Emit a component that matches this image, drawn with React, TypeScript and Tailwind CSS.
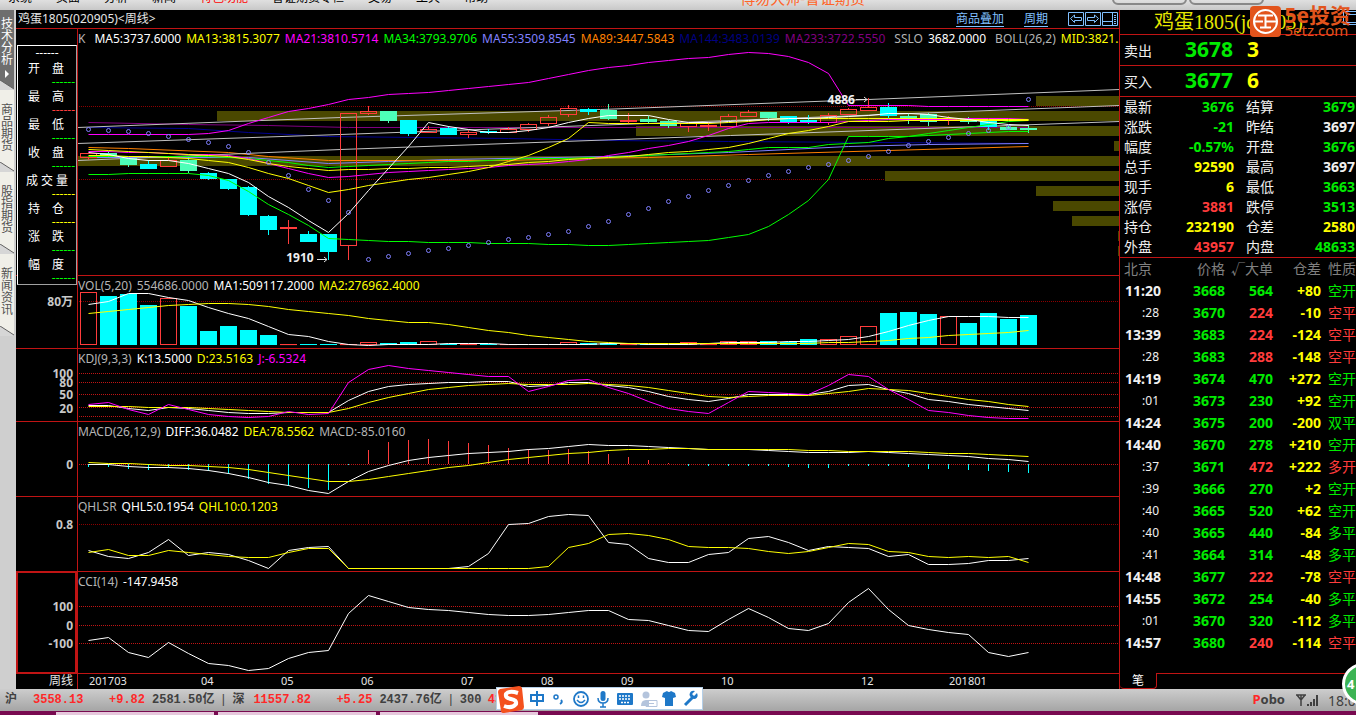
import React from 'react';

const range = (n: number) => Array.from({ length: n }, (_, i) => i);
const barX = (i: number) => 88 + i * 20;
const toPoints = (ys: number[]) => ys.map((y, i) => `${barX(i)},${y}`).join(' ');

const WHITE = '#ffffff';
const YELLOW = '#ffff00';
const MAGENTA = '#ff00ff';
const GREEN = '#00ff00';
const RED = '#ff3c3c';
const CYAN = '#00ffff';
const MINT = '#4dffb8';

// [kind, body top, body bottom, wick top, wick bottom]
type Candle = ['r' | 'c' | 'm', number, number, number, number];

const candles: Candle[] = [
  ['r', 153, 158, 153, 160], ['m', 153, 157, 151, 157], ['m', 158, 165, 158, 167], ['c', 164, 169, 160, 169],
  ['r', 160, 167, 157, 167], ['m', 160, 171, 157, 173], ['c', 173, 179, 172, 180], ['c', 179, 189, 179, 190],
  ['c', 187, 215, 186, 216], ['c', 216, 230, 215, 235], ['r', 227, 229, 220, 244], ['c', 234, 242, 231, 242],
  ['c', 234, 252, 234, 260], ['r', 113, 246, 113, 260], ['r', 111, 114, 106, 115], ['m', 111, 121, 111, 123],
  ['c', 120, 134, 120, 136], ['r', 129, 133, 126, 133], ['c', 128, 135, 126, 135], ['r', 132, 135, 130, 138],
  ['c', 131, 133, 129, 134], ['r', 129, 133, 127, 133], ['r', 124, 130, 123, 132], ['r', 117, 124, 115, 126],
  ['r', 108, 115, 105, 117], ['c', 109, 112, 108, 115], ['m', 110, 119, 104, 120], ['r', 120, 121, 113, 124],
  ['m', 119, 122, 116, 124], ['m', 121, 126, 120, 128], ['r', 123, 127, 122, 132], ['r', 125, 127, 122, 131],
  ['r', 116, 127, 114, 127], ['r', 112, 117, 110, 117], ['m', 112, 118, 112, 121], ['c', 116, 122, 116, 124],
  ['c', 120, 122, 115, 124], ['r', 115, 123, 113, 125], ['r', 109, 115, 108, 115], ['r', 107, 111, 98, 111],
  ['c', 107, 116, 103, 118], ['m', 116, 118, 114, 124], ['m', 114, 122, 113, 126], ['r', 119, 120, 116, 125],
  ['m', 119, 122, 117, 124], ['c', 121, 127, 120, 130], ['m', 127, 130, 125, 130], ['m', 128, 130, 125, 133],
];

const sar = [
  129, 130, 131, 133, 136, 139, 142, 146, 152, 162, 175, 189, 200, 212, 259, 256, 253, 250, 248, 245, 242, 239, 237, 234,
  231, 226, 221, 214, 208, 201, 196, 190, 185, 180, 175, 171, 167, 164, 160, 156, 151, 145, 141, 137, 133, 130, 127, 99,
];

// x, y of the price distribution bars, which all run to the right edge
const distribution = [
  [217, 111], [78, 156], [636, 126], [1036, 96], [1114, 141], [885, 171], [1036, 186], [1053, 201], [1072, 216],
  [1118, 231], [1118, 246],
];

const priceLines: { color: string; ys: number[] }[] = [
  { color: MAGENTA, ys: [134, 134, 134, 134, 134, 134, 133, 130, 123, 117, 111, 108, 104, 99, 97, 94, 93, 92, 90, 88, 86, 84, 82, 78, 74, 70, 67, 65, 62, 60, 58, 57, 54, 52, 53, 56, 62, 73, 105, 105, 105, 105, 106, 106, 106, 106, 106, 106] },
  { color: GREEN, ys: [174, 174, 173, 173, 173, 173, 175, 180, 191, 204, 214, 225, 238, 239, 240, 241, 241, 242, 242, 242, 243, 243, 243, 244, 244, 245, 245, 244, 243, 242, 241, 240, 237, 234, 226, 214, 200, 179, 136, 136, 136, 136, 135, 134, 133, 132, 131, 131] },
  { color: GREEN, ys: [156, 156, 156, 156, 156, 156, 156, 157, 158, 160, 162, 165, 167, 166, 165, 164, 163, 162, 161, 161, 160, 159, 158, 158, 158, 157, 157, 156, 155, 154, 153, 152, 151, 149, 147, 147, 147, 144, 143, 142, 138, 136, 133, 130, 127, 124, 121, 120] },
  { color: MAGENTA, ys: [151, 151, 152, 152, 153, 154, 154, 155, 158, 163, 168, 173, 177, 176, 174, 172, 171, 170, 169, 168, 167, 165, 164, 163, 161, 159, 155, 152, 148, 145, 141, 135, 128, 123, 122, 122, 122, 122, 121, 120, 119, 119, 119, 119, 118, 118, 118, 119] },
  { color: YELLOW, ys: [149, 150, 151, 152, 153, 154, 155, 156, 159, 163, 166, 168, 170, 169, 169, 168, 168, 167, 167, 166, 165, 164, 162, 161, 159, 158, 157, 156, 154, 152, 151, 149, 147, 143, 138, 133, 130, 126, 121, 121, 121, 120, 120, 120, 120, 120, 120, 120] },
  { color: YELLOW, ys: [155, 155, 156, 156, 157, 158, 160, 162, 167, 173, 178, 185, 192, 189, 185, 182, 179, 177, 174, 171, 167, 161, 155, 147, 138, 122, 123, 123, 123, 123, 123, 123, 122, 121, 119, 118, 118, 118, 118, 118, 118, 118, 118, 118, 119, 119, 119, 119] },
  { color: WHITE, ys: [152, 154, 158, 160, 160, 163, 168, 173, 182, 196, 207, 220, 232, 213, 190, 168, 146, 122, 126, 129, 132, 132, 130, 127, 122, 118, 115, 115, 115, 119, 122, 122, 121, 120, 119, 118, 118, 117, 116, 115, 113, 113, 114, 117, 119, 122, 124, 125] },
];

const slowLines = [
  { color: '#800080', points: '88,122 188,124 268,125 348,127 1028,127' },
  { color: '#000090', points: '88,127 188,128 248,132 328,136 508,138 608,140 728,141 1028,143' },
  { color: '#8080ff', points: '88,157 248,157 328,163 388,161 448,159 608,156 728,152 848,146 928,144 1028,143' },
  { color: '#ff8000', points: '88,147 128,148 228,152 268,156 328,160 508,160 568,158 648,157 748,154 888,150 1028,146' },
  { color: '#c0c0c0', points: '77,127 340,117 600,109 868,99 1119,89' },
  { color: '#c0c0c0', points: '77,143 340,134 730,120 1119,105' },
  { color: '#c0c0c0', points: '77,160 340,149 730,135 1119,121' },
];

const volume: ['r' | 'c', number][] = [
  ['r', 292], ['c', 296], ['c', 294], ['c', 305], ['r', 298], ['c', 306], ['c', 331], ['c', 326], ['c', 330], ['c', 335],
  ['r', 344], ['c', 344], ['c', 344], ['r', 344], ['r', 342], ['c', 343], ['c', 342], ['r', 341], ['c', 344], ['r', 344],
  ['c', 344], ['r', 344], ['c', 345], ['c', 345], ['r', 342], ['c', 343], ['c', 343], ['r', 344], ['c', 344], ['c', 345],
  ['r', 342], ['r', 344], ['r', 341], ['r', 341], ['c', 341], ['c', 342], ['c', 339], ['r', 339], ['r', 336], ['r', 326],
  ['c', 313], ['c', 312], ['c', 314], ['r', 316], ['c', 323], ['c', 313], ['c', 319], ['c', 315],
];

const volMa1 = [304, 301, 293, 293, 297, 300, 307, 313, 318, 326, 334, 336, 341, 344, 345, 344, 344, 344, 343, 343, 343, 344, 344, 344, 344, 344, 343, 343, 344, 344, 344, 343, 342, 342, 342, 341, 341, 340, 339, 336, 331, 325, 320, 316, 316, 316, 317, 317];
const volMa2 = [313, 311, 309, 307, 305, 304, 303, 303, 304, 306, 309, 311, 313, 315, 318, 320, 322, 322, 324, 327, 330, 332, 335, 337, 339, 341, 342, 343, 343, 343, 343, 343, 343, 343, 343, 343, 343, 342, 342, 341, 340, 338, 337, 335, 334, 333, 332, 330];

const kdjK = [405, 405, 408, 410, 407, 408, 410, 412, 413, 413, 412, 412, 412, 400, 391, 386, 384, 383, 382, 382, 381, 381, 386, 385, 382, 382, 385, 387, 391, 396, 399, 401, 398, 394, 394, 394, 394, 391, 385, 384, 389, 393, 399, 401, 404, 406, 408, 410];
const kdjD = [406, 406, 406, 407, 407, 407, 408, 409, 410, 411, 412, 412, 412, 408, 402, 397, 393, 389, 387, 385, 384, 383, 384, 384, 384, 383, 384, 385, 387, 390, 393, 396, 397, 396, 395, 395, 395, 393, 391, 388, 389, 390, 393, 396, 399, 401, 404, 406];
const kdjJ = [404, 402, 409, 414, 404, 409, 414, 416, 417, 416, 411, 414, 413, 382, 369, 365, 368, 370, 372, 374, 376, 376, 391, 386, 380, 379, 387, 393, 401, 408, 411, 413, 402, 391, 392, 393, 394, 385, 374, 376, 389, 399, 410, 412, 415, 417, 418, 418];

const diff = [464, 464, 466, 467, 467, 468, 470, 473, 477, 482, 485, 490, 493, 481, 471, 465, 460, 457, 455, 453, 452, 451, 449, 448, 446, 444, 445, 445, 446, 447, 448, 449, 449, 449, 450, 451, 452, 452, 452, 451, 452, 453, 454, 455, 456, 458, 459, 461];
const dea = [462, 463, 463, 464, 465, 465, 466, 467, 469, 472, 475, 478, 481, 481, 479, 476, 473, 470, 467, 465, 462, 459, 457, 455, 453, 452, 450, 449, 449, 448, 448, 449, 449, 449, 449, 449, 450, 450, 451, 451, 451, 451, 452, 453, 453, 454, 455, 456];
const hist = [467, 467, 469, 470, 468, 470, 471, 474, 479, 484, 486, 488, 490, 465, 450, 442, 440, 439, 441, 443, 445, 448, 449, 450, 449, 451, 454, 457, 460, 463, 466, 466, 466, 466, 466, 467, 468, 468, 466, 466, 466, 467, 469, 469, 470, 471, 472, 473];

const qhl5 = [550, 556, 558, 552, 539, 555, 552, 554, 560, 568, 550, 547, 546, 568, 568, 568, 568, 568, 568, 566, 553, 524, 523, 516, 514, 515, 542, 544, 558, 562, 562, 554, 552, 538, 536, 542, 550, 546, 547, 548, 556, 554, 564, 564, 563, 560, 560, 558];
const qhl10 = [552, 549, 555, 555, 550, 552, 554, 556, 557, 557, 552, 548, 548, 568, 568, 568, 568, 568, 568, 568, 568, 568, 568, 566, 547, 543, 534, 533, 535, 539, 546, 547, 547, 548, 551, 553, 551, 547, 543, 544, 551, 552, 556, 557, 556, 557, 556, 562];
const cci = [640, 637, 652, 657, 642, 653, 663, 665, 670, 668, 658, 652, 650, 613, 595, 601, 607, 609, 610, 612, 614, 615, 615, 614, 612, 610, 610, 619, 620, 625, 630, 631, 619, 608, 617, 628, 630, 623, 602, 588, 609, 625, 629, 632, 634, 652, 656, 652];

const months = [
  { label: '201703', x: 89 }, { label: '04', x: 201 }, { label: '05', x: 281 }, { label: '06', x: 361 },
  { label: '07', x: 461 }, { label: '08', x: 541 }, { label: '09', x: 621 }, { label: '10', x: 721 },
  { label: '12', x: 861 }, { label: '201801', x: 949 },
];

const legend = [
  ['开盘', 'text-[#00ff00]'], ['最高', 'text-[#ff3c3c]'], ['最低', 'text-[#00ff00]'], ['收盘', 'text-[#00ff00]'],
  ['成交量', 'text-[#ffff00]'], ['持仓', 'text-[#ffff00]'], ['涨跌', 'text-[#00ff00]'], ['幅度', 'text-[#00ff00]'],
];

const G = 'text-[#00eb00]';
const R = 'text-[#ff3c3c]';
const Y = 'text-[#ffff00]';
const W = 'text-[#f0f0f0]';

const quotes = [
  ['最新', '3676', G, '结算', '3679', G],
  ['涨跌', '-21', G, '昨结', '3697', W],
  ['幅度', '-0.57%', G, '开盘', '3676', G],
  ['总手', '92590', Y, '最高', '3697', W],
  ['现手', '6', Y, '最低', '3663', G],
  ['涨停', '3881', R, '跌停', '3513', G],
  ['持仓', '232190', Y, '仓差', '2580', Y],
  ['外盘', '43957', R, '内盘', '48633', G],
];

const trades = [
  ['11:20', '3668', '564', '+80', '空开', G],
  [':28', '3670', '224', '-10', '空平', R],
  ['13:39', '3683', '224', '-124', '空平', R],
  [':28', '3683', '288', '-148', '空平', R],
  ['14:19', '3674', '470', '+272', '空开', G],
  [':01', '3673', '230', '+92', '空开', G],
  ['14:24', '3675', '200', '-200', '双平', G],
  ['14:40', '3670', '278', '+210', '空开', G],
  [':37', '3671', '472', '+222', '多开', R],
  [':39', '3666', '270', '+2', '空开', G],
  [':40', '3665', '520', '+62', '空开', G],
  [':40', '3665', '440', '-84', '多平', G],
  [':41', '3664', '314', '-48', '多平', G],
  ['14:48', '3677', '222', '-78', '空平', R],
  ['14:55', '3672', '254', '-40', '多平', G],
  [':01', '3670', '320', '-112', '多平', G],
  ['14:57', '3680', '240', '-114', '空平', R],
];

function Line({ ys, color }: { ys: number[]; color: string }) {
  return <polyline points={toPoints(ys)} fill="none" stroke={color} strokeWidth="1" transform="translate(0.5 0.5)" />;
}

interface PanelProps {
  className: string;
  top: number;
  height: number;
  grid: number[];
  dim?: boolean;
  labels?: [string, number][];
  header: [string, string][];
  active?: boolean;
  aside?: React.ReactNode;
  overlay?: React.ReactNode;
  children: React.ReactNode;
}

function Panel({ className, top, height, grid, dim, labels = [], header, active, aside, overlay, children }: PanelProps) {
  const pct = (y: number) => `${((y - top) / height) * 100}%`;
  return (
    <section className={`flex min-h-0 border-b border-[#c01414] ${className}`}>
      <div className="relative w-[62px] shrink-0 border-r border-[#c01414]">
        {active && <div className="absolute -top-px inset-x-0 -bottom-px border-2 border-[#c01414]" />}
        {labels.map(([text, y]) => (
          <span
            key={text}
            className="absolute right-[4px] -translate-y-1/2 text-[12px] leading-[16px] font-bold text-[#c8c8c8]"
            style={{ top: pct(y) }}
          >
            {text}
          </span>
        ))}
        {aside}
      </div>
      <div className="relative flex-1 min-w-0 overflow-hidden">
        <svg className="absolute inset-0 w-full h-full" viewBox={`78 ${top} 1041 ${height}`} preserveAspectRatio="none">
          {grid.map((y) => (
            <line key={y} x1="79" x2="1119" y1={y + 0.5} y2={y + 0.5} stroke={dim ? '#8c0000' : '#c01414'} strokeDasharray="1 1" shapeRendering="crispEdges" />
          ))}
          {children}
        </svg>
        <div className="relative flex gap-[5px] pt-[2px] whitespace-nowrap text-[12px] leading-[16px]">
          {header.map(([text, cls]) => (
            <span key={text} className={cls}>{text}</span>
          ))}
        </div>
        {overlay}
      </div>
    </section>
  );
}

function SideTab({ text, active }: { text: string; active?: boolean }) {
  return (
    <button className={`relative flex flex-col items-center justify-start w-full text-[12px] leading-[12px] ${active ? 'h-[80px] pt-[8px] bg-[#6e6e6e] text-white' : 'h-[82px] pt-[14px] bg-[#f0efe8] text-[#505050]'}`}>
      {text.split('').map((c) => (
        <span key={c}>{c}</span>
      ))}
      {active && (
        <svg className="w-[4px] h-[8px] mt-[4px]" viewBox="0 0 4 8">
          <path d="M0 0 L4 4 L0 8 Z" fill="#fff" />
        </svg>
      )}
      <svg className="absolute bottom-0 left-0 w-full h-[10px]" viewBox="0 0 14 10" preserveAspectRatio="none">
        <path d="M0 0 L14 9 V10 H0 Z" fill="#d6d6d6" />
        <path d="M0 0 L14 9" stroke="#606060" fill="none" />
      </svg>
    </button>
  );
}

function Legend() {
  return (
    <div className="absolute z-10 top-[16px] left-px right-0 h-[240px] bg-black border border-t-white border-l-white border-b-[#a0a0a0] border-r-[#a0a0a0] text-[12px] text-white">
      <div className="h-[14px] text-center leading-[14px]">------</div>
      {legend.map(([name, color]) => (
        <div key={name} className="h-[28px]">
          <div className={`flex justify-between leading-[18px] ${name.length > 2 ? 'px-2' : 'pl-[10px] pr-[12px]'}`}>
            {name.split('').map((c) => (
              <span key={c}>{c}</span>
            ))}
          </div>
          <div className={`text-right leading-[8px] pr-px ${color}`}>------</div>
        </div>
      ))}
    </div>
  );
}

function PricePanel() {
  return (
    <Panel
      className="flex-[246_1_0px]"
      top={29}
      height={246}
      grid={[106, 179]}
      dim
      header={[
        ['K', 'text-[#b4b4b4] mr-1'],
        ['MA5:3737.6000', 'text-white'],
        ['MA13:3815.3077', 'text-[#ffff00]'],
        ['MA21:3810.5714', 'text-[#ff00ff]'],
        ['MA34:3793.9706', 'text-[#00ff00]'],
        ['MA55:3509.8545', 'text-[#8080ff]'],
        ['MA89:3447.5843', 'text-[#ff8000]'],
        ['MA144:3483.0139', 'text-[#000080]'],
        ['MA233:3722.5550', 'text-[#800080]'],
        ['SSLO', 'text-[#b4b4b4] ml-1'],
        ['3682.0000', 'text-white'],
        ['BOLL(26,2)', 'text-[#b4b4b4] ml-1'],
        ['MID:3821.5000', 'text-[#ffff00]'],
      ]}
      aside={<Legend />}
      overlay={
        <>
          <span className="absolute left-[20%] top-[90%] text-[12px] leading-[16px] font-bold text-[#f0f0f0]">1910</span>
          <span className="absolute left-[72%] top-[26%] text-[12px] leading-[14px] font-bold text-[#f0f0f0]">4886</span>
        </>
      }
    >
      {distribution.map(([x, y]) => (
        <rect key={`${x}-${y}`} x={x} y={y} width={1119 - x} height="10" fill="#4a4800" />
      ))}
      {slowLines.map((l) => (
        <polyline key={l.points} points={l.points} fill="none" stroke={l.color} transform="translate(0.5 0.5)" />
      ))}
      {candles.map(([kind, top, bottom, high, low], i) => {
        const x = barX(i);
        if (kind === 'r') {
          return (
            <g key={x} stroke={RED} fill="none" shapeRendering="crispEdges">
              <rect x={x - 7.5} y={top + 0.5} width="16" height={Math.max(bottom - top - 1, 1)} />
              <path d={`M${x + 0.5} ${high} V${top} M${x + 0.5} ${bottom} V${low}`} />
            </g>
          );
        }
        return (
          <g key={x} fill={kind === 'c' ? CYAN : MINT} shapeRendering="crispEdges">
            <rect x={x - 8} y={top} width="17" height={bottom - top} />
            <rect x={x} y={high} width="1" height={low - high} />
          </g>
        );
      })}
      {priceLines.map((l, i) => (
        <Line key={i} ys={l.ys} color={l.color} />
      ))}
      {sar.map((y, i) => (
        <circle key={i} cx={barX(i) + 0.5} cy={y + 0.5} r="2" fill="none" stroke="#8080ff" />
      ))}
      <path d="M317 259.5 H327 M324 257 L327 259.5 L324 262 M856 99.5 H867 M864 97 L867 99.5 L864 102" fill="none" stroke="#e0e0e0" />
    </Panel>
  );
}

function VolumePanel() {
  return (
    <Panel
      className="flex-[72_1_0px]"
      top={276}
      height={72}
      grid={[301]}
      dim
      labels={[['80万', 302]]}
      header={[['VOL(5,20)', 'text-[#b4b4b4]'], ['554686.0000', 'text-[#b4b4b4]'], ['MA1:509117.2000', 'text-white'], ['MA2:276962.4000', 'text-[#ffff00]']]}
    >
      {volume.map(([kind, top], i) =>
        kind === 'c' ? (
          <rect key={i} x={barX(i) - 8} y={top} width="17" height={345 - top} fill={CYAN} />
        ) : (
          <rect key={i} x={barX(i) - 7.5} y={top + 0.5} width="16" height={Math.max(344 - top, 0.1)} fill="none" stroke={RED} />
        )
      )}
      <Line ys={volMa1} color={WHITE} />
      <Line ys={volMa2} color={YELLOW} />
    </Panel>
  );
}

function KdjPanel() {
  return (
    <Panel
      className="flex-[72_1_0px]"
      top={349}
      height={72}
      grid={[373, 382, 394, 407, 416]}
      labels={[['100', 374], ['80', 383], ['50', 395], ['20', 409]]}
      header={[['KDJ(9,3,3)', 'text-[#b4b4b4]'], ['K:13.5000', 'text-white'], ['D:23.5163', 'text-[#ffff00]'], ['J:-6.5324', 'text-[#ff00ff]']]}
    >
      <Line ys={kdjK} color={WHITE} />
      <Line ys={kdjD} color={YELLOW} />
      <Line ys={kdjJ} color={MAGENTA} />
    </Panel>
  );
}

function MacdPanel() {
  return (
    <Panel
      className="flex-[74_1_0px]"
      top={422}
      height={74}
      grid={[464]}
      labels={[['0', 465]]}
      header={[['MACD(26,12,9)', 'text-[#b4b4b4]'], ['DIFF:36.0482', 'text-white'], ['DEA:78.5562', 'text-[#ffff00]'], ['MACD:-85.0160', 'text-[#b4b4b4]']]}
    >
      {hist.map((y, i) => (
        <rect key={i} x={barX(i)} y={Math.min(y, 464)} width="1" height={Math.abs(y - 464)} fill={y > 464 ? CYAN : RED} />
      ))}
      <Line ys={diff} color={WHITE} />
      <Line ys={dea} color={YELLOW} />
    </Panel>
  );
}

function ChartArea() {
  return (
    <main className="flex flex-col flex-1 min-w-0 bg-black">
      <header className="flex items-center h-[19px] shrink-0 pl-[2px] border-b border-[#c01414] text-[12px] text-[#e6e6e6]">
        <h1>鸡蛋1805(020905)&lt;周线&gt;</h1>
        <a href="#overlay" className="ml-auto text-[#80c0ff] leading-[14px] border-b border-[#80c0ff]">商品叠加</a>
        <a href="#period" className="mx-5 text-[#80c0ff] leading-[14px] border-b border-[#80c0ff]">周期</a>
        <svg className="w-[51px] h-[15px]" viewBox="0 0 51 15" fill="none" stroke="#80c0ff">
          <path d="M0.5 0.5 H15.5 V13.5 H0.5 Z M17.5 0.5 H32.5 V13.5 H17.5 Z M34.5 0.5 H49.5 V13.5 H34.5 Z" />
          <path d="M6.5 3 L2.5 6.5 L6.5 10.5 V8.5 H13.5 V5.5 H6.5 Z M26.5 3 L30.5 6.5 L26.5 10.5 V8.5 H19.5 V5.5 H26.5 Z" />
          <path d="M44.5 1 V13 M35 9.5 H44 M46 3.5 H48 M46 5.5 H48 M46 7.5 H48 M46 9.5 H48 M46 11.5 H48" />
        </svg>
      </header>
      <PricePanel />
      <VolumePanel />
      <KdjPanel />
      <MacdPanel />
      <Panel
        className="flex-[74_1_0px]"
        top={497}
        height={74}
        grid={[524]}
        dim
        labels={[['0.8', 525]]}
        header={[['QHLSR', 'text-[#b4b4b4]'], ['QHL5:0.1954', 'text-white'], ['QHL10:0.1203', 'text-[#ffff00]']]}
      >
        <Line ys={qhl5} color={WHITE} />
        <Line ys={qhl10} color={YELLOW} />
      </Panel>
      <Panel
        className="flex-[101_1_0px]"
        top={572}
        height={101}
        grid={[606, 625, 643]}
        active
        labels={[['100', 607], ['0', 626], ['-100', 644]]}
        header={[['CCI(14)', 'text-[#b4b4b4]'], ['-147.9458', 'text-white']]}
      >
        <Line ys={cci} color={WHITE} />
      </Panel>
      <footer className="flex h-[15px] shrink-0 text-[12px] leading-[14px] text-[#e6e6e6]">
        <div className="w-[62px] pr-[4px] text-right border-r border-[#c01414]">周线</div>
        <div className="relative flex-1">
          {months.map((m) => (
            <span key={m.label} className="absolute top-0 text-[11px]" style={{ left: `${((m.x - 78) / 1041) * 100}%` }}>{m.label}</span>
          ))}
        </div>
      </footer>
    </main>
  );
}

function QuotePanel() {
  return (
    <aside className="flex flex-col w-[237px] shrink-0 overflow-hidden bg-black border-l border-[#c01414] text-[14px]">
      <div className="relative h-[25px] shrink-0 border-b border-[#c01414]">
        <h2 className="pl-[34px] whitespace-nowrap text-[20px] leading-[24px] text-[#e6e600] font-['Liberation_Serif','Noto_Sans_CJK_SC',serif]">
          鸡蛋1805(jd1805)
        </h2>
        <svg className="absolute top-[1px] right-0 w-[13px] h-[14px]" viewBox="0 0 13 14" fill="none" stroke="#80c0ff">
          <path d="M13 0.5 H0.5 V13.5 H13 M13 3.500 H3.500 V11.500 H13" />
        </svg>
      </div>
      {[['卖出', '3678', '3'], ['买入', '3677', '6']].map(([name, price, lots]) => (
        <div key={name} className="flex items-center h-[31px] shrink-0 pl-[4px] border-b border-[#c01414]">
          <span className={`w-[61px] ${W}`}>{name}</span>
          <span className={`w-[62px] text-[21px] font-bold ${G}`}>{price}</span>
          <span className={`text-[21px] font-bold ${Y}`}>{lots}</span>
        </div>
      ))}
      <table className="w-full shrink-0 table-fixed border-b border-[#c01414]">
        <tbody>
          {quotes.map(([a, av, ac, b, bv, bc]) => (
            <tr key={a} className="h-[20px] leading-[20px]">
              <th className={`w-[44px] pl-[4px] text-left font-normal ${W}`}>{a}</th>
              <td className={`w-[70px] text-right font-bold ${ac}`}>{av}</td>
              <th className={`w-[52px] pl-[12px] text-left font-normal ${W}`}>{b}</th>
              <td className={`text-right font-bold pr-px ${bc}`}>{bv}</td>
            </tr>
          ))}
        </tbody>
      </table>
      <table className="w-full shrink-0 table-fixed whitespace-nowrap">
        <thead>
          <tr className="h-[22px] leading-[22px] text-[#808080]">
            <th className="w-[41px] pl-[4px] text-left font-normal">北京</th>
            <th className="w-[64px] text-right font-normal">价格</th>
            <th className="w-[48px] text-right font-normal">√大单</th>
            <th className="w-[48px] text-right font-normal">仓差</th>
            <th className="pl-[7px] text-left font-normal">性质</th>
          </tr>
        </thead>
        <tbody>
          {trades.map(([time, price, lots, delta, kind, color], i) => (
            <tr key={i} className="h-[22px] leading-[22px] font-bold text-right">
              <td className={time.length > 3 ? W : `text-[12px] font-normal pr-[2px] ${W}`}>{time}</td>
              <td className={G}>{price}</td>
              <td className={color}>{lots}</td>
              <td className={Y}>{delta}</td>
              <td className={`pl-[7px] text-left font-normal ${color}`}>{kind}</td>
            </tr>
          ))}
        </tbody>
      </table>
      <div className="flex h-[16px] mt-auto">
        <button className="w-[37px] rounded-b-sm border-r border-b border-[#c01414] text-[12px] leading-[14px] text-white">笔</button>
        <div className="flex-1 border-t border-[#c01414]" />
      </div>
    </aside>
  );
}

function Brand() {
  return (
    <div className="absolute z-20 top-[6px] right-[5px] flex items-center gap-[3px] text-[#e2541c]">
      <svg className="w-[31px] h-[31px]" viewBox="0 0 31 31">
        <rect width="31" height="31" rx="4" fill="#e2541c" />
        <circle cx="15.5" cy="15.5" r="11.500" fill="none" stroke="#fff" strokeWidth="2" />
        <path d="M8 9.500 H23 M4 15.500 H13 M15.500 9.500 V22 M15.500 15.500 H27 M10 21.500 H21" stroke="#fff" strokeWidth="2" fill="none" />
      </svg>
      <div>
        <div className="text-[21px] leading-[18px] font-bold">5e投资</div>
        <div className="text-[15px] leading-[13px]">5etz.com</div>
      </div>
    </div>
  );
}

function InputBar() {
  return (
    <div className="absolute z-20 bottom-[5px] left-[496px] flex items-center h-[23px] w-[207px] bg-white border border-[#b4cfe8] text-[#1e78c8]">
      <svg className="w-[28px] h-[28px] shrink-0" viewBox="0 0 28 28">
        <path d="M3 4 L22 1 Q24 1 25 3 L27 22 Q27 24 25 25 L7 28 Q4 28 4 26 L1 7 Q1 5 3 4 Z" fill="#f4511e" />
        <path d="M21 8 Q12 5 9 9 Q8 13 14 14 Q20 15 19 19 Q15 24 7 21" fill="none" stroke="#fff" strokeWidth="4" />
      </svg>
      <svg className="w-[176px] h-[20px]" viewBox="0 0 176 20" fill="none" stroke="currentColor" strokeWidth="2">
        <path d="M6 6 H18 V12 H6 Z M12 2 V17" />
        <circle cx="31" cy="8" r="2" strokeWidth="1.5" />
        <path d="M36 11 Q38 13 35 15" />
        <circle cx="56" cy="10" r="7" strokeWidth="1.8" />
        <path d="M53.500 6.500 V9 M58.500 6.500 V9 M52 11 Q56 16 60 11" strokeWidth="1.5" />
        <rect x="75.500" y="2" width="5" height="10" rx="2.500" fill="currentColor" stroke="none" />
        <path d="M73 9 Q73 14 78 14 Q83 14 83 9 M78 14 V18 M75 18 H81" strokeWidth="1.5" />
        <rect x="92" y="4" width="16" height="12" rx="1" fill="currentColor" stroke="none" />
        <path d="M94 7 H106 M94 10 H106 M96 13.500 H104" stroke="#fff" strokeDasharray="2 1" strokeWidth="1.5" />
        <g fill="#b4c4dc" stroke="none">
          <circle cx="121" cy="6" r="3.500" />
          <path d="M116 17 Q116 11 121 11 Q123 11 124 12 V17 Z" />
        </g>
        <path d="M121 11.500 H132 V17.500 H121 Z M124 14.500 H129" stroke="#b4c4dc" strokeWidth="1" />
        <path d="M138 4 L142 2 Q144 4 146 2 L150 4 L151 8 L148 9 V17 H140 V9 L137 8 Z" fill="currentColor" stroke="none" />
        <path d="M160 16 L168 8" strokeWidth="3" />
        <path d="M172 4 L169 7 L167 5 L170 2 Q165 1 164.500 6 Q166 10 170 10 Q174 8 172 4 Z" fill="currentColor" stroke="none" />
      </svg>
    </div>
  );
}

function StatusBar() {
  return (
    <div className="flex items-center h-[22px] shrink-0 pl-[5px] whitespace-nowrap bg-linear-to-b from-[#cdcdcd] to-[#a5a5a5] text-[12px] font-bold text-[#404040] font-['Liberation_Mono','Noto_Sans_CJK_SC',monospace]">
      <span className="w-[28px]">沪</span>
      <span className="w-[76px] text-[#ff2828]">3558.13</span>
      <span className="w-[43px] text-[#ff2828]">+9.82</span>
      <span>2581.50亿</span>
      <span className="w-[18px] text-center font-normal">|</span>
      <span className="w-[21px]">深</span>
      <span className="w-[83px] text-[#ff2828]">11557.82</span>
      <span className="w-[43px] text-[#ff2828]">+5.25</span>
      <span>2437.76亿</span>
      <span className="w-[18px] text-center font-normal">|</span>
      <span className="w-[28px]">300</span>
      <span className="text-[#ff2828]">4389.89</span>
      <span className="ml-auto mr-[11px] text-[13px] font-['Noto_Sans',sans-serif]"><span className="text-[#ff2828]">P</span>obo</span>
      <svg className="w-[22px] h-[13px] mr-[10px]" viewBox="0 0 22 13" fill="none" stroke="#404040" strokeWidth="2">
        <path d="M0 1 H10 M5 1 V12 M1 1 L5 6 L9 1" strokeWidth="1.5" />
        <path d="M12 10 V12 M15 8 V12 M18 5 V12 M21 1 V12" />
      </svg>
      <span className="w-[28px] overflow-hidden text-[14px] font-normal font-['Noto_Sans',sans-serif]">18:06</span>
    </div>
  );
}

export default function App() {
  return (
    <div className="relative flex flex-col h-screen overflow-hidden bg-[#cfcfcf] font-['Noto_Sans','Noto_Sans_CJK_SC',sans-serif]">
      <nav className="relative flex items-end gap-6 h-[10px] shrink-0 pl-[8px] pb-[6px] overflow-hidden bg-linear-to-b from-[#e0e0e0] to-[#c8c8c8] whitespace-nowrap text-[12px] leading-[12px] text-black">
        {['系统', '页面', '分析', '新闻', '特色功能', '鲁证期货专栏', '交易', '工具', '帮助'].map((item) => (
          <button key={item} className={item === '特色功能' ? 'text-[#ff0000]' : ''}>{item}</button>
        ))}
        <span className="ml-auto mr-[223px] text-[15px] leading-[12px] text-[#ff6428]">博易大师-鲁证期货</span>
        <span className="w-[75px] h-[12px] -mb-[1px] rounded-md border-2 border-[#888]" />
        <span className="w-[75px] h-[12px] -mb-[1px] -ml-[22px] mr-[92px] rounded-md border-2 border-[#888]" />
      </nav>
      <div className="flex flex-1 min-h-0">
        <div className="w-[16px] shrink-0 pr-[2px] bg-[#cfcfcf]">
          <SideTab text="技术分析" active />
          <SideTab text="商品期货" />
          <SideTab text="股指期货" />
          <SideTab text="新闻资讯" />
        </div>
        <ChartArea />
        <QuotePanel />
      </div>
      <StatusBar />
      <div className="flex gap-[4px] h-[4px] shrink-0 pl-[56px] pt-px bg-[#780a50]">
        {range(3).map((i) => (
          <div key={i} className="w-[158px] h-[3px] bg-[#e6c8dc]" />
        ))}
      </div>
      <Brand />
      <InputBar />
      <div className="absolute z-20 bottom-[10px] -right-[28px] w-[42px] h-[42px] rounded-full border-3 border-white bg-[#3cb454] text-white text-[13px] font-bold leading-[36px] pl-[2px]">4</div>
    </div>
  );
}
